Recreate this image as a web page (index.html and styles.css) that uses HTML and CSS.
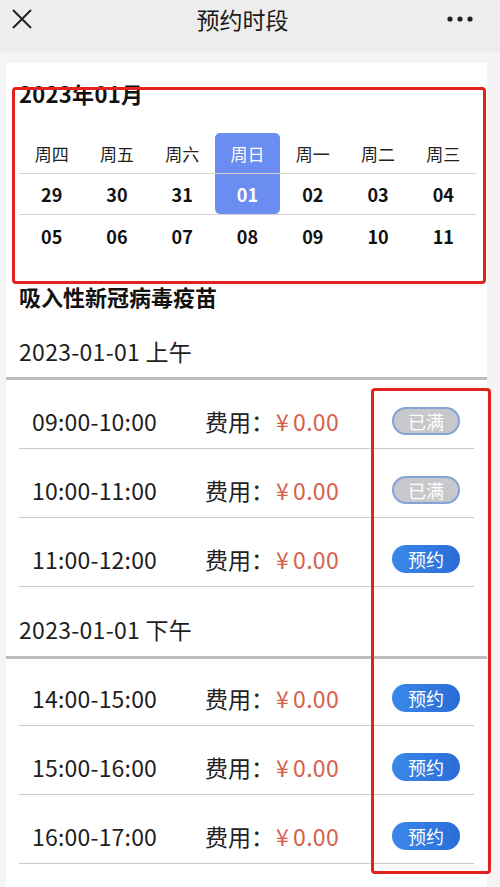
FILE: index.html
```html
<!DOCTYPE html>
<html lang="zh-CN">
<head>
<meta charset="utf-8">
<title>预约时段</title>
<link rel="stylesheet" href="styles.css">
</head>
<body>
<div class="header">
  <svg class="close" width="22" height="22" viewBox="0 0 22 22"><path d="M2 2 L20 20 M20 2 L2 20" stroke="#222" stroke-width="2" fill="none"/></svg>
  <div class="title">预约时段</div>
  <svg class="more" width="28" height="8" viewBox="0 0 28 8"><circle cx="4" cy="4" r="2.6" fill="#222"/><circle cx="14" cy="4" r="2.6" fill="#222"/><circle cx="24" cy="4" r="2.6" fill="#222"/></svg>
</div>
<div class="card">
  <div class="month">2023年01月</div>
  <div class="calendar">
    <div class="cal-row week">
      <div class="cell">周四</div><div class="cell">周五</div><div class="cell">周六</div><div class="cell active top">周日</div><div class="cell">周一</div><div class="cell">周二</div><div class="cell">周三</div>
    </div>
    <div class="cal-row date">
      <div class="cell">29</div><div class="cell">30</div><div class="cell">31</div><div class="cell active bottom">01</div><div class="cell">02</div><div class="cell">03</div><div class="cell">04</div>
    </div>
    <div class="cal-row date last">
      <div class="cell">05</div><div class="cell">06</div><div class="cell">07</div><div class="cell">08</div><div class="cell">09</div><div class="cell">10</div><div class="cell">11</div>
    </div>
  </div>
  <div class="vaccine">吸入性新冠病毒疫苗</div>
  <div class="period first">2023-01-01 上午</div>
  <div class="thick"></div>
  <div class="slots">
    <div class="slot"><span class="time">09:00-10:00</span><span class="fee">费用：</span><span class="price"><span class="yen">¥</span>0.00</span><span class="btn full">已满</span></div>
    <div class="slot"><span class="time">10:00-11:00</span><span class="fee">费用：</span><span class="price"><span class="yen">¥</span>0.00</span><span class="btn full">已满</span></div>
    <div class="slot"><span class="time">11:00-12:00</span><span class="fee">费用：</span><span class="price"><span class="yen">¥</span>0.00</span><span class="btn book">预约</span></div>
  </div>
  <div class="period second">2023-01-01 下午</div>
  <div class="thick second-thick"></div>
  <div class="slots">
    <div class="slot s2"><span class="time">14:00-15:00</span><span class="fee">费用：</span><span class="price"><span class="yen">¥</span>0.00</span><span class="btn book">预约</span></div>
    <div class="slot"><span class="time">15:00-16:00</span><span class="fee">费用：</span><span class="price"><span class="yen">¥</span>0.00</span><span class="btn book">预约</span></div>
    <div class="slot"><span class="time">16:00-17:00</span><span class="fee">费用：</span><span class="price"><span class="yen">¥</span>0.00</span><span class="btn book">预约</span></div>
  </div>
</div>
<div class="mark mark-cal"></div>
<div class="mark mark-btn"></div>
</body>
</html>
```
FILE: styles.css
```css
* { box-sizing: border-box; }
html, body { margin: 0; padding: 0; }
body {
  width: 500px;
  height: 887px;
  overflow: hidden;
  background: #f4f4f4;
  font-family: "Noto Sans CJK SC", "Noto Sans", sans-serif;
  color: #1e1e1e;
  position: relative;
}
.header {
  height: 52px;
  background: #ededed;
  display: grid;
  grid-template-columns: 1fr auto 1fr;
  align-items: center;
  padding: 0 26px 14px 11px;
}
.header .close { justify-self: start; }
.header .more { justify-self: end; }
.title {
  font-size: 23px;
  line-height: 30px;
  color: #1a1a1a;
  text-align: center;
}
.card {
  margin: 11px 13px 0 6px;
  background: #fff;
  height: 830px;
  padding-top: 15px;
}
.month {
  font-size: 22px;
  font-weight: 700;
  line-height: 30px;
  padding-left: 13px;
  color: #111;
  letter-spacing: 0.3px;
}
.calendar {
  margin: 25px 11px 0 13px;
}
.cal-row {
  display: grid;
  grid-template-columns: repeat(7, 1fr);
  border-bottom: 1px solid #d2d2d2;
}
.cal-row.last { border-bottom: none; }
.cell {
  height: 40px;
  display: flex;
  align-items: center;
  justify-content: center;
}
.week .cell { font-size: 17px; color: #222; }
.date .cell { font-size: 18px; font-weight: 700; color: #111; }
.last .cell { height: 41px; }
.cell.active { background: #6b8cf0; color: #fff; }
.cell.top { border-radius: 5px 5px 0 0; }
.cell.bottom { border-radius: 0 0 5px 5px; }
.vaccine {
  margin-top: 25px;
  padding-left: 13px;
  font-size: 22px;
  font-weight: 700;
  line-height: 30px;
  color: #111;
}
.period {
  padding-left: 13px;
  font-size: 23px;
  line-height: 30px;
  color: #1e1e1e;
  letter-spacing: 0.3px;
}
.period.first { margin-top: 25px; }
.period.second { margin-top: 27px; }
.thick {
  height: 3px;
  background: #bdbdbd;
  margin-top: 11px;
}
.thick.second-thick { margin-top: 12px; }
.slots { padding: 0 13px 0 13px; }
.slot {
  height: 69px;
  border-bottom: 1px solid #c9c9c9;
  display: flex;
  align-items: flex-end;
  padding: 0 0 12px 13px;
}
.slot.s2 { height: 67px; }
.time {
  width: 173px;
  font-size: 23px;
  line-height: 30px;
  color: #1e1e1e;
  letter-spacing: 0.2px;
}
.fee {
  font-size: 23px;
  line-height: 30px;
  color: #222;
  width: 71px;
}
.price {
  font-size: 23px;
  line-height: 30px;
  color: #d5614c;
  letter-spacing: 0.3px;
}
.yen { margin-right: 4px; }
.btn {
  margin-left: auto;
  margin-right: 14px;
  width: 68px;
  height: 28px;
  border-radius: 14px;
  display: flex;
  align-items: center;
  justify-content: center;
  font-size: 18px;
  color: #fff;
  margin-bottom: 1px;
}
.btn.full {
  background: #c6c8cb;
  border: 2px solid #82a4d6;
}
.btn.book {
  background: linear-gradient(90deg, #3a88ea, #2a6cd6);
}
.mark {
  position: absolute;
  border: 3px solid #e2221d;
  border-radius: 4px;
}
.mark-cal { left: 12px; top: 87px; width: 474px; height: 197px; }
.mark-btn { left: 371px; top: 388px; width: 120px; height: 486px; }
```
